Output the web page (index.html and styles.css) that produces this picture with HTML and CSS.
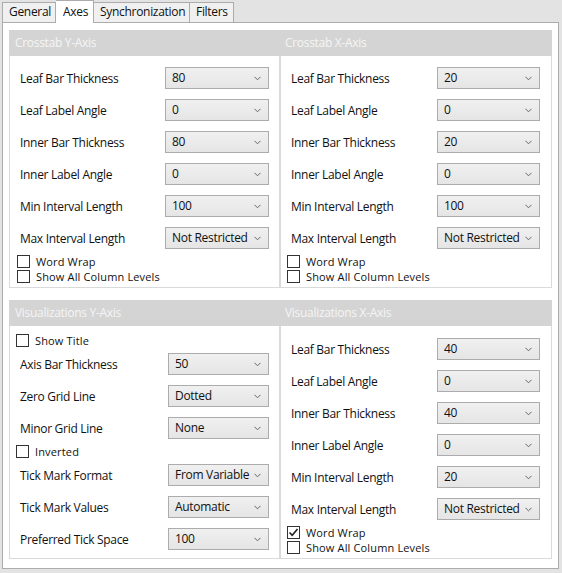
FILE: index.html
```html
<!DOCTYPE html>
<html>
<head>
<meta charset="utf-8">
<link rel="stylesheet" href="styles.css">
</head>
<body>
<div class="tabs">
  <div class="tab t-general">General</div>
  <div class="tab t-axes active">Axes</div>
  <div class="tab t-sync">Synchronization</div>
  <div class="tab t-filters">Filters</div>
</div>
<div class="panel">
  <div class="grid">
    <div class="group left">
      <div class="header">Crosstab Y-Axis</div>
      <div class="body top">
        <div class="row"><span class="label">Leaf Bar Thickness</span><div class="combo">80<svg class="chev" width="7" height="5" viewBox="0 0 7 5"><path d="M0.5 0.8 L3.5 3.8 L6.5 0.8" fill="none" stroke="#666" stroke-width="1"/></svg></div></div>
        <div class="row"><span class="label">Leaf Label Angle</span><div class="combo">0<svg class="chev" width="7" height="5" viewBox="0 0 7 5"><path d="M0.5 0.8 L3.5 3.8 L6.5 0.8" fill="none" stroke="#666" stroke-width="1"/></svg></div></div>
        <div class="row"><span class="label">Inner Bar Thickness</span><div class="combo">80<svg class="chev" width="7" height="5" viewBox="0 0 7 5"><path d="M0.5 0.8 L3.5 3.8 L6.5 0.8" fill="none" stroke="#666" stroke-width="1"/></svg></div></div>
        <div class="row"><span class="label">Inner Label Angle</span><div class="combo">0<svg class="chev" width="7" height="5" viewBox="0 0 7 5"><path d="M0.5 0.8 L3.5 3.8 L6.5 0.8" fill="none" stroke="#666" stroke-width="1"/></svg></div></div>
        <div class="row"><span class="label">Min Interval Length</span><div class="combo">100<svg class="chev" width="7" height="5" viewBox="0 0 7 5"><path d="M0.5 0.8 L3.5 3.8 L6.5 0.8" fill="none" stroke="#666" stroke-width="1"/></svg></div></div>
        <div class="row"><span class="label">Max Interval Length</span><div class="combo">Not Restricted<svg class="chev" width="7" height="5" viewBox="0 0 7 5"><path d="M0.5 0.8 L3.5 3.8 L6.5 0.8" fill="none" stroke="#666" stroke-width="1"/></svg></div></div>
        <label class="check"><span class="box"></span><span class="ctext">Word Wrap</span></label>
        <label class="check"><span class="box"></span><span class="ctext">Show All Column Levels</span></label>
      </div>
    </div>
    <div class="group right">
      <div class="header">Crosstab X-Axis</div>
      <div class="body top">
        <div class="row"><span class="label">Leaf Bar Thickness</span><div class="combo">20<svg class="chev" width="7" height="5" viewBox="0 0 7 5"><path d="M0.5 0.8 L3.5 3.8 L6.5 0.8" fill="none" stroke="#666" stroke-width="1"/></svg></div></div>
        <div class="row"><span class="label">Leaf Label Angle</span><div class="combo">0<svg class="chev" width="7" height="5" viewBox="0 0 7 5"><path d="M0.5 0.8 L3.5 3.8 L6.5 0.8" fill="none" stroke="#666" stroke-width="1"/></svg></div></div>
        <div class="row"><span class="label">Inner Bar Thickness</span><div class="combo">20<svg class="chev" width="7" height="5" viewBox="0 0 7 5"><path d="M0.5 0.8 L3.5 3.8 L6.5 0.8" fill="none" stroke="#666" stroke-width="1"/></svg></div></div>
        <div class="row"><span class="label">Inner Label Angle</span><div class="combo">0<svg class="chev" width="7" height="5" viewBox="0 0 7 5"><path d="M0.5 0.8 L3.5 3.8 L6.5 0.8" fill="none" stroke="#666" stroke-width="1"/></svg></div></div>
        <div class="row"><span class="label">Min Interval Length</span><div class="combo">100<svg class="chev" width="7" height="5" viewBox="0 0 7 5"><path d="M0.5 0.8 L3.5 3.8 L6.5 0.8" fill="none" stroke="#666" stroke-width="1"/></svg></div></div>
        <div class="row"><span class="label">Max Interval Length</span><div class="combo">Not Restricted<svg class="chev" width="7" height="5" viewBox="0 0 7 5"><path d="M0.5 0.8 L3.5 3.8 L6.5 0.8" fill="none" stroke="#666" stroke-width="1"/></svg></div></div>
        <label class="check"><span class="box"></span><span class="ctext">Word Wrap</span></label>
        <label class="check"><span class="box"></span><span class="ctext">Show All Column Levels</span></label>
      </div>
    </div>
    <div class="group left">
      <div class="header">Visualizations Y-Axis</div>
      <div class="body bottom vy">
        <label class="check"><span class="box"></span><span class="ctext">Show Title</span></label>
        <div class="row"><span class="label">Axis Bar Thickness</span><div class="combo">50<svg class="chev" width="7" height="5" viewBox="0 0 7 5"><path d="M0.5 0.8 L3.5 3.8 L6.5 0.8" fill="none" stroke="#666" stroke-width="1"/></svg></div></div>
        <div class="row"><span class="label">Zero Grid Line</span><div class="combo">Dotted<svg class="chev" width="7" height="5" viewBox="0 0 7 5"><path d="M0.5 0.8 L3.5 3.8 L6.5 0.8" fill="none" stroke="#666" stroke-width="1"/></svg></div></div>
        <div class="row"><span class="label">Minor Grid Line</span><div class="combo">None<svg class="chev" width="7" height="5" viewBox="0 0 7 5"><path d="M0.5 0.8 L3.5 3.8 L6.5 0.8" fill="none" stroke="#666" stroke-width="1"/></svg></div></div>
        <label class="check"><span class="box"></span><span class="ctext">Inverted</span></label>
        <div class="row"><span class="label">Tick Mark Format</span><div class="combo">From Variable<svg class="chev" width="7" height="5" viewBox="0 0 7 5"><path d="M0.5 0.8 L3.5 3.8 L6.5 0.8" fill="none" stroke="#666" stroke-width="1"/></svg></div></div>
        <div class="row"><span class="label">Tick Mark Values</span><div class="combo">Automatic<svg class="chev" width="7" height="5" viewBox="0 0 7 5"><path d="M0.5 0.8 L3.5 3.8 L6.5 0.8" fill="none" stroke="#666" stroke-width="1"/></svg></div></div>
        <div class="row"><span class="label">Preferred Tick Space</span><div class="combo">100<svg class="chev" width="7" height="5" viewBox="0 0 7 5"><path d="M0.5 0.8 L3.5 3.8 L6.5 0.8" fill="none" stroke="#666" stroke-width="1"/></svg></div></div>
      </div>
    </div>
    <div class="group right">
      <div class="header">Visualizations X-Axis</div>
      <div class="body bottom">
        <div class="row"><span class="label">Leaf Bar Thickness</span><div class="combo">40<svg class="chev" width="7" height="5" viewBox="0 0 7 5"><path d="M0.5 0.8 L3.5 3.8 L6.5 0.8" fill="none" stroke="#666" stroke-width="1"/></svg></div></div>
        <div class="row"><span class="label">Leaf Label Angle</span><div class="combo">0<svg class="chev" width="7" height="5" viewBox="0 0 7 5"><path d="M0.5 0.8 L3.5 3.8 L6.5 0.8" fill="none" stroke="#666" stroke-width="1"/></svg></div></div>
        <div class="row"><span class="label">Inner Bar Thickness</span><div class="combo">40<svg class="chev" width="7" height="5" viewBox="0 0 7 5"><path d="M0.5 0.8 L3.5 3.8 L6.5 0.8" fill="none" stroke="#666" stroke-width="1"/></svg></div></div>
        <div class="row"><span class="label">Inner Label Angle</span><div class="combo">0<svg class="chev" width="7" height="5" viewBox="0 0 7 5"><path d="M0.5 0.8 L3.5 3.8 L6.5 0.8" fill="none" stroke="#666" stroke-width="1"/></svg></div></div>
        <div class="row"><span class="label">Min Interval Length</span><div class="combo">20<svg class="chev" width="7" height="5" viewBox="0 0 7 5"><path d="M0.5 0.8 L3.5 3.8 L6.5 0.8" fill="none" stroke="#666" stroke-width="1"/></svg></div></div>
        <div class="row"><span class="label">Max Interval Length</span><div class="combo">Not Restricted<svg class="chev" width="7" height="5" viewBox="0 0 7 5"><path d="M0.5 0.8 L3.5 3.8 L6.5 0.8" fill="none" stroke="#666" stroke-width="1"/></svg></div></div>
        <label class="check"><span class="box checked"><svg width="11" height="11" viewBox="0 0 11 11"><path d="M1.5 5.5 L4.2 8.3 L9.5 2" fill="none" stroke="#222" stroke-width="1.6"/></svg></span><span class="ctext">Word Wrap</span></label>
        <label class="check"><span class="box"></span><span class="ctext">Show All Column Levels</span></label>
      </div>
    </div>
  </div>
</div>
</body>
</html>
```
FILE: styles.css
```css
* { box-sizing: border-box; }
html, body { margin: 0; padding: 0; }
body {
  width: 562px;
  height: 573px;
  background: #e3e3e3;
  font-family: "Open Sans", "Noto Sans", sans-serif;
  font-size: 12px;
  color: #111;
  overflow: hidden;
}
.tabs {
  display: flex;
  align-items: flex-end;
  height: 23px;
  padding-left: 2px;
  position: relative;
  z-index: 2;
}
.tab {
  height: 20px;
  line-height: 18px;
  background: #f0f0f0;
  border: 1px solid #acacac;
  border-bottom: none;
  margin-bottom: 1px;
  padding-left: 6px;
  white-space: nowrap;
  letter-spacing: -0.3px;
}
.t-general { width: 54px; }
.t-axes { width: 38px; }
.t-sync { width: 96px; border-left: none; }
.t-filters { width: 44px; border-left: none; }
.tab.active {
  height: 23px;
  line-height: 22px;
  background: #fff;
  margin-bottom: 0;
  border-left: none;
  padding-left: 7px;
}
.t-general { border-right: 1px solid #acacac; }
.panel {
  margin: -1px 0 0 2px;
  width: 557px;
  height: 547px;
  background: #fff;
  border: 1px solid #acacac;
  padding: 7px 5px 7px 6px;
}
.grid {
  display: grid;
  grid-template-columns: 271px 272px;
  grid-template-rows: 258px 259px;
  row-gap: 12px;
}
.group { display: flex; flex-direction: column; }
.header {
  height: 26px;
  line-height: 26px;
  background: #d4d4d4;
  color: #f4f4f4;
  padding-left: 6px;
  letter-spacing: -0.3px;
}
.group.right .header { padding-left: 5px; }
.body {
  flex: 1;
  border: 1px solid #dadada;
  border-top: none;
  padding: 6px 0 0 0;
}
.group.right .body { border-left: 1px solid #dadada; }
.body.bottom { padding-top: 7px; }
.row {
  display: flex;
  align-items: center;
  height: 32px;
  padding-left: 10px;
}
.label {
  width: 145px;
  letter-spacing: -0.3px;
  white-space: nowrap;
}
.group.right .label { width: 146px; }
.vy .label { width: 148px; }
.combo {
  position: relative;
  width: 104px;
  height: 22px;
  line-height: 20px;
  border: 1px solid #acacac;
  background: linear-gradient(#f0f0f0, #e5e5e5);
  padding-left: 6px;
  letter-spacing: -0.3px;
  white-space: nowrap;
}
.group.right .combo { width: 103px; }
.vy .combo { width: 101px; }
.chev {
  position: absolute;
  right: 7px;
  top: 8px;
}
.check {
  display: flex;
  align-items: center;
  height: 15px;
  line-height: 15px;
  padding-left: 7px;
  white-space: nowrap;
}
.ctext {
  font-size: 11px;
  letter-spacing: 0.15px;
}
.vy .check { padding-left: 6px; }
.group.right .check { padding-left: 6px; }
.box {
  width: 13px;
  height: 13px;
  border: 1px solid #333;
  background: #fff;
  margin-right: 6px;
  display: flex;
  align-items: center;
  justify-content: center;
}
.box svg { display: block; }
```
